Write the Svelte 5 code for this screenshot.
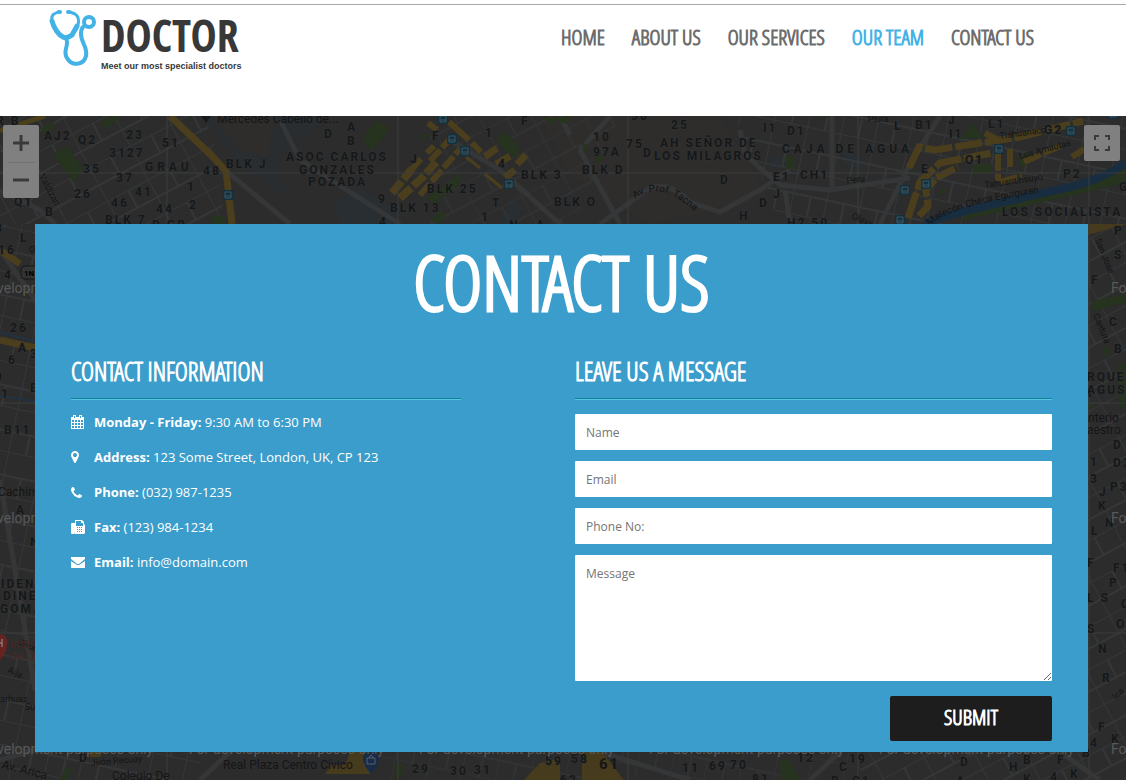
<script>
  const links = [
    { label: 'HOME' },
    { label: 'ABOUT US' },
    { label: 'OUR SERVICES' },
    { label: 'OUR TEAM', active: true },
    { label: 'CONTACT US' }
  ];

  const details = [
    { icon: 'calendar', term: 'Monday - Friday:', text: '9:30 AM to 6:30 PM' },
    { icon: 'marker', term: 'Address:', text: '123 Some Street, London, UK, CP 123' },
    { icon: 'phone', term: 'Phone:', text: '(032) 987-1235' },
    { icon: 'fax', term: 'Fax:', text: '(123) 984-1234' },
    { icon: 'mail', term: 'Email:', text: 'info@domain.com' }
  ];

  // Block labels: x, baseline y, text
  const blocks = [
    [-4, 125, 'R B'], [44, 140, 'AJ2'], [78, 144, 'Q2'], [126, 139, '23'], [162, 147, '51'],
    [109, 157, '3127'], [83, 173, '35'], [116, 182, '37'], [74, 198, '26'], [135, 196, '41'],
    [187, 191, '1'], [111, 207, '46'], [156, 213, '44'], [189, 209, '2'], [14, 206, 'Q1'],
    [45, 216, 'B'], [105, 224, 'BLK 7'], [152, 229, 'D GR'], [203, 175, '48'], [226, 168, 'BLK J'], [324, 138, 'D'],
    [347, 131, 'A'], [347, 145, 'B'], [410, 163, 'J'], [432, 140, 'F'], [485, 137, '1'],
    [521, 125, 'F'], [498, 168, '4'], [427, 193, 'BLK 25'], [390, 212, 'BLK 13'],
    [378, 203, '9'], [379, 226, '4'], [492, 207, 'T'], [481, 221, '1'], [509, 229, 'N'], [536, 229, 'A'],
    [521, 179, 'BLK 3'], [554, 206, 'BLK O'], [582, 174, 'BLK D'], [593, 141, '10'],
    [593, 156, '97A'], [626, 148, '75'], [671, 129, '25'], [631, 120, '38'], [643, 157, 'D'],
    [763, 132, 'I1'], [787, 135, 'D1'], [720, 184, 'D'], [773, 181, 'E1'], [800, 179, 'CH1'],
    [773, 198, 'J'], [759, 207, 'D'], [739, 220, 'H'], [787, 227, 'H2 50'], [894, 130, 'L'],
    [915, 129, 'B1'], [948, 124, 'J'], [949, 138, 'I1'], [988, 128, 'L1'], [1044, 134, 'G2'],
    [965, 164, 'O1'], [921, 173, 'E'], [1063, 178, 'P2'], [1119, 191, 'G'],
    [-5, 232, '8'], [20, 242, 'L'], [-2, 254, '16'], [4, 279, '4'], [10, 332, '26'], [18, 352, 'A'],
    [30, 358, '3'], [8, 364, '6'], [-5, 381, '9'], [1, 398, '1'], [30, 392, 'B'], [4, 434, 'B11'],
    [16, 514, 'A'], [30, 546, 'N'], [1114, 235, 'P E'], [1114, 259, 'S'], [1091, 284, 'F'],
    [1109, 326, 'C'], [1114, 353, 'B'], [1088, 397, 'I'], [1113, 449, 'D'], [1090, 466, '1'],
    [1113, 467, 'D3'], [1090, 483, '3'], [1110, 491, 'P3'], [1099, 496, 'J'], [1098, 510, 'K'],
    [1105, 527, 'N'], [1091, 535, 'L'], [1087, 567, 'F'], [1113, 572, 'F1'], [1109, 587, 'P'],
    [1087, 602, 'L S'], [1121, 608, 'C'], [1087, 633, 'S'], [1116, 628, 'O'], [1098, 653, 'N'],
    [1102, 682, 'R'], [1082, 757, 'B'], [1098, 731, 'F'], [1111, 743, 'K'], [1090, 747, '4'],
    [79, 762, 'D'], [412, 773, '29'], [450, 775, '30'], [474, 774, '31'], [545, 765, '59'],
    [571, 763, '58'], [560, 784, '62'], [682, 772, '11'], [709, 770, '69'], [730, 769, '70'],
    [752, 783, '81'], [797, 762, '12'], [849, 763, '19'], [839, 771, 'C'], [831, 785, 'B'], [852, 785, 'C1'],
    [960, 766, 'D'], [1009, 771, 'H'], [1023, 764, 'B'], [1023, 783, 'K'], [956, 785, 'A'],
    [1057, 764, 'F'], [1070, 778, 'K'], [1050, 781, '4']
  ];

  const districts = [
    [145, 171, 'GRAU', 4], [286, 161, 'ASOC CARLOS', 2], [299, 174, 'GONZALES', 2], [308, 186, 'POZADA', 2],
    [660, 147, 'AH SEÑOR DE', 2], [654, 160, 'LOS MILAGROS', 2], [782, 153, 'CAJA DE AGUA', 4],
    [1002, 216, 'LOS SOCIALISTA', 2], [1, 588, 'IDEN', 2], [3, 600, 'DINE', 2], [0, 613, 'GOM.', 2],
    [1087, 381, 'RQUE', 2], [1087, 394, 'AGUS', 2]
  ];

  // Watermark tiles: x, baseline y
  const watermarks = [
    [-42, 293], [1111, 293], [-42, 523], [1111, 523],
    [-42, 754], [189, 754], [419, 754], [649, 754], [879, 754], [1111, 754]
  ];
  const stations = [[228, 195], [443, 119], [452, 139], [465, 151], [509, 184], [999, 149], [926, 184], [905, 190], [900, 220], [1071, 131], [1113, 114]];

  let form = $state({ name: '', email: '', phone: '', message: '' });
</script>

<div class="page">
  <header>
    <a class="logo" href="#home" aria-label="Doctor, home">
      <svg class="scope" viewBox="0 0 50 58" aria-hidden="true">
        <g fill="none" stroke="#43b2e6" stroke-linecap="round" stroke-linejoin="round">
          <path d="M9 3L5 5C-1 9 7 24 13 27Q17 30 22 26C30 20 32 9 26 5L21 3" stroke-width="3" />
          <path d="M3 12C5 20 10 26 14 28Q18 30 23 26L28 17" stroke-width="5" />
          <path d="M17 29C21 36 13 42 18 49C23 58 35 56 37 47C39 38 32 34 32 25Q32 20 34 18" stroke-width="4" />
          <circle cx="40" cy="13" r="5" stroke-width="4" />
          <path d="M10 3H11M19 3H20" stroke-width="4" />
        </g>
      </svg>
      <span class="brand">
        <span class="word">DOCTOR</span>
        <span class="tag">Meet our most specialist doctors</span>
      </span>
    </a>
    <nav>
      {#each links as link}
        <a href="#section" class:active={link.active}>{link.label}</a>
      {/each}
    </nav>
  </header>

  <main>
    <svg class="map" viewBox="0 116 1126 664" preserveAspectRatio="xMidYMin slice" aria-hidden="true">
      <defs>
        <pattern id="grid" width="46" height="38" patternUnits="userSpaceOnUse" patternTransform="rotate(-28)">
          <path d="M0 0H46M0 20H46M0 0V38M24 0V20" stroke="#353637" stroke-width="2" fill="none" />
        </pattern>
        <pattern id="grid2" width="34" height="44" patternUnits="userSpaceOnUse" patternTransform="rotate(12)">
          <path d="M0 0H34M0 24H34M0 0V44M18 24V44" stroke="#353637" stroke-width="2" fill="none" />
        </pattern>
        <path id="tacna" d="M635 199Q663 178 700 217" />
        <path id="checa" d="M930 226Q950 205 1046 192" />
      </defs>
      <rect y="116" width="1126" height="664" fill="#2c2c2c" />
      <path d="M0 116H210L225 224H0Z" fill="url(#grid)" />
      <path d="M200 116H330L275 160L290 200L240 165Z" fill="#292d30" />
      <path d="M212 116H275L267 158L240 150Z M540 116H720L770 200L650 224L570 175Z" fill="#2f2d2b" />
      <path d="M335 204L360 187L397 212V224H340ZM770 155L786 157L784 169L771 168ZM842 150L862 158V172L845 164ZM510 196L523 207L514 224H500Z" fill="#292e33" />
      <path d="M735 116H940L900 224H780Z" fill="url(#grid2)" />
      <path d="M940 116H1126V224H900Z" fill="url(#grid2)" />
      <path d="M430 116H620L575 224H430Z" fill="url(#grid)" opacity=".6" />
      <path d="M0 224H35V752H200V780H0Z" fill="url(#grid2)" />
      <path d="M1088 224H1126V780H860V752H1088Z" fill="url(#grid)" />
      <path d="M380 752H860V780H380Z" fill="url(#grid2)" opacity=".6" />
      <g fill="none" stroke="#353637" stroke-width="5">
        <path d="M400 224L300 160L280 120M225 170L290 224M560 224L500 170L450 140M580 150L610 116M580 150L620 224M570 135L560 116M600 224L650 188Q670 181 690 202L720 212L760 190L790 170M740 130L745 155L780 185L830 190L910 178M880 224L912 160L940 116M832 116V190M785 190L790 224M0 190L40 210L55 224" />
        <path d="M0 250L35 300M0 480L35 690M0 760L70 740M200 780L230 752M600 752L690 780M810 780L840 752M1060 752L1100 780" />
      </g>
      <g fill="#25331f">
        <path d="M53 156L67 145L83 170L74 182ZM42 128L54 120L54 128L42 134ZM101 123L112 116H121L106 129ZM362 139L377 120L390 129L372 151ZM422 133L430 135L425 141ZM497 137L506 133L520 149L516 158L499 146ZM551 118L573 116L566 124ZM592 149L604 157L597 165ZM786 156H793V169H786ZM959 139L973 124L984 138ZM973 164H992V174H973ZM1018 158L1030 152L1038 159L1021 168ZM936 195L944 188L948 193ZM427 198L462 172L458 186L432 204ZM431 220L440 211L446 214L439 224ZM543 116L556 119L550 125ZM820 116H829V118ZM582 142L588 146L584 153Z" />
        <path d="M970 211L1126 168V183L960 221ZM1091 301L1126 294V302L1094 311ZM1102 349L1109 346V359ZM1117 365L1126 362V405L1119 410ZM1088 404H1096L1088 409ZM64 770L72 768L66 780H60ZM395 765L402 763L403 775L396 780ZM779 761L788 758L800 780H782ZM212 216H225V224H212Z" />
      </g>
      <path d="M925 224Q955 212 995 204L1070 187Q1100 180 1126 163" fill="none" stroke="#182e40" stroke-width="8" />
      <path d="M0 332Q18 338 35 341M0 396L35 401" fill="none" stroke="#213342" stroke-width="2" />
      <g fill="none" stroke="#4a3e1c">
        <path d="M170 116L213 157L226 171L232 224M0 250L20 264M0 340L35 348" stroke-width="7" />
        <path d="M0 131L45 116" stroke-width="5" />
        <path d="M392 193L412 169M400 198L422 178L438 160" stroke-width="8" stroke-dasharray="15 3" />
        <path d="M420 195L460 149M412 169L421 159M427 153L434 146M430 161L450 139" stroke-width="6" stroke-dasharray="15 3" />
        <path d="M428 123L437 130M449 122L469 140M472 143L481 152" stroke-width="6" />
        <path d="M466 157L480 168M485 174L502 188" stroke-width="3" />
        <path d="M485 157L497 148M496 164L510 156M517 164L526 155M505 177L515 170" stroke-width="7" />
        <path d="M908 218L920 182L940 163L992 153M909 168L919 147L935 150L1020 137L1083 121" stroke-width="7" stroke-dasharray="27 3" />
        <path d="M998 153V181M1010 149V170M1000 182L1022 176M1024 162L1060 146M985 133L1002 142M1072 157L1084 149" stroke-width="6" stroke-dasharray="18 3" />
        <path d="M919 216L928 206L926 190L936 178L958 167" stroke-width="7" stroke-dasharray="20 3" />
      </g>
      <path d="M1088 224H1126L1088 235ZM350 752H375L370 774H325L331 765H345ZM582 752H602L624 780H582ZM540 763L560 758V780H524ZM90 752H103L100 757H90Z" fill="#463b1c" />
      <path d="M201 116H211L206 123Z" fill="#151a1e" />
      <g stroke="#3b3c3d" fill="none">
        <path d="M167 116V780M398 116V780M628 116V780M858 116V780M1089 116V780M0 173H1126M0 403H1126M0 633H1126" />
      </g>
      <g class="blocks">
        {#each blocks as [x, y, label]}
          <text {x} {y}>{label}</text>
        {/each}
      </g>
      <g class="blocks">
        {#each districts as [x, y, label, spacing]}
          <text {x} {y} style="letter-spacing: {spacing}px">{label}</text>
        {/each}
      </g>
      <g class="streets">
        <text x="217" y="123" class="place">Mercedes Cabello de...</text>
        <text class="road"><textPath href="#tacna">Av. Prof. Tacna</textPath></text>
        <text class="road"><textPath href="#checa">Malecón Checa Eguiguren</textPath></text>
        <text x="868" y="122">Piura</text>
        <text x="847" y="184" transform="rotate(-8 847 184)">Peru</text>
        <text x="851" y="218" transform="rotate(25 851 218)">Olaya</text>
        <text x="1000" y="139" transform="rotate(-8 1000 139)">Tiahuanaco</text>
        <text x="1020" y="159" transform="rotate(-15 1020 159)">Los Amautas</text>
        <text x="985" y="188" transform="rotate(-8 985 188)">Tahuantinsuyo</text>
        <text x="39" y="176" transform="rotate(62 39 176)">Valdizan</text>
        <text x="28" y="250" transform="rotate(30 28 250)">Qu</text>
        <text x="1095" y="240" transform="rotate(68 1095 240)">San Jose</text>
        <text x="1093" y="315" transform="rotate(68 1093 315)">Cantuta</text>
        <text x="18" y="644" transform="rotate(25 18 644)">Jirón</text>
        <text x="7" y="672" transform="rotate(25 7 672)">Aija</text>
        <text x="0" y="702">arhuaz</text>
        <text x="25" y="710">Su</text>
        <text x="1" y="768" transform="rotate(14 1 768)" class="place">Av. Arica</text>
        <text x="91" y="766" transform="rotate(-5 91 766)">Jirón Recuay</text>
        <text x="112" y="780" class="place">Colegio De</text>
        <text x="223" y="769" class="place">Real Plaza Centro Cívico</text>
        <text x="-2" y="496" class="place">Cachin</text>
        <text x="1088" y="422" class="place">nterio</text>
        <text x="1087" y="434" class="place">aestro</text>
        <text x="1116" y="700" transform="rotate(-45 1116 700)">Ica</text>
        <text x="10" y="648" class="place hospital">Insti</text>
        <text x="10" y="660" class="place hospital">de O</text>
        <text x="599" y="769" class="big">61</text>
      </g>
      <path d="M-8 646A8 9 0 1 1 7 646Q6 654 0 660" fill="#652322" />
      <path d="M-2 639V647M2 639V647M-2 643H2" stroke="#999" />
      <path d="M363 759A8 8 0 1 1 379 759Q378 766 371 774Q364 766 363 759" fill="#182b49" />
      <path d="M367 758H375V764H367ZM369 758Q371 752 373 758" fill="none" stroke="#56606b" />
      <rect x="21" y="266" width="22" height="13" rx="4" fill="#333" stroke="#161616" />
      <text x="24" y="276" class="route">1N</text>
      {#each stations as [x, y]}
        <g transform="translate({x} {y})">
          <rect x="-5" y="-5" width="10" height="10" rx="1" fill="#11313f" />
          <path d="M-3 -3H3V3H-3ZM-3 1H3" fill="none" stroke="#43555e" />
        </g>
      {/each}
      <g class="watermark">
        {#each watermarks as [x, y]}
          <text {x} {y}>For development purposes only</text>
        {/each}
      </g>
    </svg>

    <div class="zoom">
      <button type="button" aria-label="Zoom in">
        <svg viewBox="0 0 18 18"><path d="M1 9H17M9 1V17" stroke="#3a3a3a" stroke-width="3" /></svg>
      </button>
      <button type="button" aria-label="Zoom out">
        <svg viewBox="0 0 18 18"><path d="M1 9H17" stroke="#3a3a3a" stroke-width="3" /></svg>
      </button>
    </div>
    <button class="full" type="button" aria-label="Toggle fullscreen">
      <svg viewBox="0 0 18 18"><path d="M2 6V2H6M12 2H16V6M16 12V16H12M6 16H2V12" fill="none" stroke="#3a3a3a" stroke-width="2" /></svg>
    </button>

    <section class="panel">
      <h1>CONTACT US</h1>
      <div class="columns">
        <div>
          <h2>CONTACT INFORMATION</h2>
          <ul>
            {#each details as item}
              <li>
                <span class="icon">
                  {#if item.icon === 'calendar'}
                    <svg viewBox="0 0 13 14" width="13" height="14" shape-rendering="crispEdges">
                      <path fill="#fff" fill-rule="evenodd" d="M0 2H2V0H5V2H8V0H11V2H13V14H0ZM1 5V7H3V5ZM4 5V7H6V5ZM7 5V7H9V5ZM10 5V7H12V5ZM1 8V10H3V8ZM4 8V10H6V8ZM7 8V10H9V8ZM10 8V10H12V8ZM1 11V13H3V11ZM4 11V13H6V11ZM7 11V13H9V11ZM10 11V13H12V11ZM3 1V3H4V1ZM9 1V3H10V1Z" />
                    </svg>
                  {:else if item.icon === 'marker'}
                    <svg viewBox="0 128 1024 1536" width="8" height="12">
                      <path fill="#fff" d="M768 640q0-106-75-181t-181-75-181 75-75 181 75 181 181 75 181-75 75-181zm256 0q0 109-33 179l-364 774q-16 33-47.5 52t-67.5 19-67.5-19-46.500-52l-365-774q-33-70-33-179 0-212 150-362t362-150 362 150 150 362z" />
                    </svg>
                  {:else if item.icon === 'phone'}
                    <svg viewBox="0 128 1408 1408" width="11" height="11">
                      <path fill="#fff" d="M1408 1240q0 27-10 70.500t-21 68.500q-21 50-122 106-94 51-186 51-27 0-52.500-3.500t-57.500-12.500-47.500-14.500-55.500-20.500-49-18q-98-35-175-83-128-79-264.500-215.500t-215.500-264.500q-48-77-83-175-3-9-18-49t-20.500-55.500-14.500-47.500-12.500-57.500-3.500-52.500q0-92 51-186 56-101 106-122 25-11 68.500-21t70.500-10q14 0 21 3 18 6 53 76 11 19 30 54t35 63.500 31 53.500q3 4 17.500 25t21.500 35.500 7 28.500q0 20-28.500 50t-62 55-62 53-28.500 46q0 9 5 22.500t8.500 20.500 14 24 11.500 19q76 137 174 235t235 174q2 1 19 11.500t24 14 20.500 8.500 22.500 5q18 0 46-28.500t53-62 55-62 50-28.500q14 0 28.500 7t35.500 21.500 25 17.500q25 15 53.500 31t63.500 35 54 30q70 35 76 53 3 7 3 21z" />
                    </svg>
                  {:else if item.icon === 'fax'}
                    <svg viewBox="0 0 14 14" width="14" height="14">
                      <path fill="#fff" fill-rule="evenodd" d="M0 4Q0 3 1 3H3V14H1Q0 14 0 13ZM4 0H11L13 2V4L14 5V13L13 14H4L3 13V3H4ZM5 1V6H12V3H10V1ZM6 7V8H7V7ZM8 7V8H9V7ZM10 7V8H11V7ZM6 9V10H7V9ZM8 9V10H9V9ZM10 9V10H11V9ZM6 11V12H7V11ZM8 11V12H9V11ZM10 11V12H11V11Z" />
                    </svg>
                  {:else}
                    <svg viewBox="0 0 14 11" width="14" height="11">
                      <path fill="#fff" d="M0 0H14V2L8 7H6L0 2ZM0 4L6 8H8L14 4V11H0Z" />
                    </svg>
                  {/if}
                </span>
                <span><strong>{item.term}</strong> {item.text}</span>
              </li>
            {/each}
          </ul>
        </div>
        <div>
          <h2>LEAVE US A MESSAGE</h2>
          <form onsubmit={(event) => event.preventDefault()}>
            <input type="text" aria-label="Name" placeholder="Name" bind:value={form.name} />
            <input type="email" aria-label="Email" placeholder="Email" bind:value={form.email} />
            <input type="tel" aria-label="Phone No" placeholder="Phone No:" bind:value={form.phone} />
            <textarea aria-label="Message" placeholder="Message" bind:value={form.message}></textarea>
            <button class="submit" type="submit">SUBMIT</button>
          </form>
        </div>
      </div>
    </section>
  </main>
</div>

<style>
  :global(body) {
    margin: 0;
  }
  .page {
    --narrow: 'Open Sans Condensed Light', 'Open Sans Condensed', 'Liberation Sans Narrow', sans-serif;
    --narrow-bold: 'Open Sans Condensed', 'Liberation Sans Narrow', sans-serif;
    display: flex;
    flex-direction: column;
    min-height: 100vh;
    font-family: 'Open Sans', sans-serif;
    background: #fff;
  }
  * {
    box-sizing: border-box;
  }
  header {
    display: flex;
    justify-content: space-between;
    align-items: flex-start;
    min-height: 112px;
    margin-top: 4px;
    padding: 4px 92px 0 49px;
    border-top: 1px solid #a9a9a9;
  }
  .logo {
    display: flex;
    gap: 2px;
    color: #383838;
    text-decoration: none;
  }
  .scope {
    width: 50px;
    height: 58px;
  }
  .brand {
    display: flex;
    flex-direction: column;
  }
  .word {
    font: bold 44px/52px var(--narrow-bold);
  }
  .tag {
    font: bold 9px/10px 'Liberation Sans', sans-serif;
    white-space: nowrap;
  }
  nav {
    display: flex;
    gap: 27px;
    padding-top: 14px;
  }
  nav a {
    color: #6d6d6d;
    font: 300 21px/28px var(--narrow);
    -webkit-text-stroke: 1px;
    text-decoration: none;
    white-space: nowrap;
  }
  nav a.active {
    color: #43b2e6;
  }
  main {
    position: relative;
    flex: 1;
    padding: 108px 38px 28px 35px;
    overflow: hidden;
    background: #2c2c2c;
  }
  .map {
    position: absolute;
    inset: 0;
    width: 100%;
    height: 100%;
  }
  .blocks text {
    font: bold 12px Roboto, sans-serif;
    letter-spacing: 2px;
    fill: #15181a;
    stroke: #333;
    stroke-width: 1px;
    paint-order: stroke;
  }
  .streets text {
    font: 9px Roboto, sans-serif;
    fill: #141516;
  }
  .streets text.place {
    font-size: 12px;
  }
  .streets text.road {
    font-size: 10px;
  }
  .streets text.hospital {
    fill: #4a2727;
  }
  .streets text.big {
    font: bold 15px Roboto, sans-serif;
    letter-spacing: 2px;
  }
  .route {
    font: bold 8px Roboto, sans-serif;
  }
  .watermark text {
    font: 14px Roboto, sans-serif;
    fill: #585858;
  }
  .zoom,
  .full {
    position: absolute;
    top: 9px;
    width: 36px;
    border-radius: 2px;
    background: #808080;
  }
  .zoom {
    left: 3px;
    display: flex;
    flex-direction: column;
    height: 73px;
  }
  .zoom button {
    display: grid;
    flex: 1;
    place-items: center;
    padding: 0;
    border: 0;
    background: none;
  }
  .zoom button + button {
    background: linear-gradient(#727272, #727272) center top / 27px 1px no-repeat;
  }
  .zoom svg,
  .full svg {
    width: 18px;
    height: 18px;
  }
  .full {
    right: 6px;
    display: grid;
    place-items: center;
    height: 36px;
    padding: 0;
    border: 0;
  }
  .panel {
    position: relative;
    padding: 18px 36px 11px;
    background: #3b9dcb;
    color: #fff;
  }
  h1 {
    margin: 0;
    font: 300 75px/80px var(--narrow);
    -webkit-text-stroke: 3px;
    text-align: center;
  }
  .columns {
    display: grid;
    grid-template-columns: 390fr 477fr;
    gap: 114px;
    margin-top: 30px;
  }
  h2 {
    margin: 0 0 14px;
    padding-bottom: 8px;
    border-bottom: 1px solid #55c4e8;
    box-shadow: inset 0 -1px #168095;
    font: 300 25px/39px var(--narrow);
    -webkit-text-stroke: 1px;
    white-space: nowrap;
  }
  ul {
    display: grid;
    gap: 19px;
    margin: 0;
    padding: 0;
    list-style: none;
  }
  li {
    display: flex;
    align-items: center;
    font-size: 13px;
    line-height: 16px;
  }
  .icon {
    display: flex;
    width: 23px;
  }
  form {
    display: grid;
    gap: 11px;
  }
  input,
  textarea {
    width: 100%;
    height: 36px;
    margin: 0;
    padding: 0 11px;
    border: 0;
    border-radius: 1px;
    background: #fff;
    font: 12px/18px 'Open Sans', sans-serif;
  }
  textarea {
    height: 126px;
    padding-top: 10px;
    resize: both;
  }
  input::placeholder,
  textarea::placeholder {
    color: #757575;
  }
  .submit {
    justify-self: end;
    width: 162px;
    height: 45px;
    margin-top: 4px;
    padding: 0 0 4px;
    border: 0;
    border-radius: 2px;
    background: #1d1d1d;
    color: #fff;
    font: 300 21px/28px var(--narrow);
    -webkit-text-stroke: 1px;
  }
</style>
